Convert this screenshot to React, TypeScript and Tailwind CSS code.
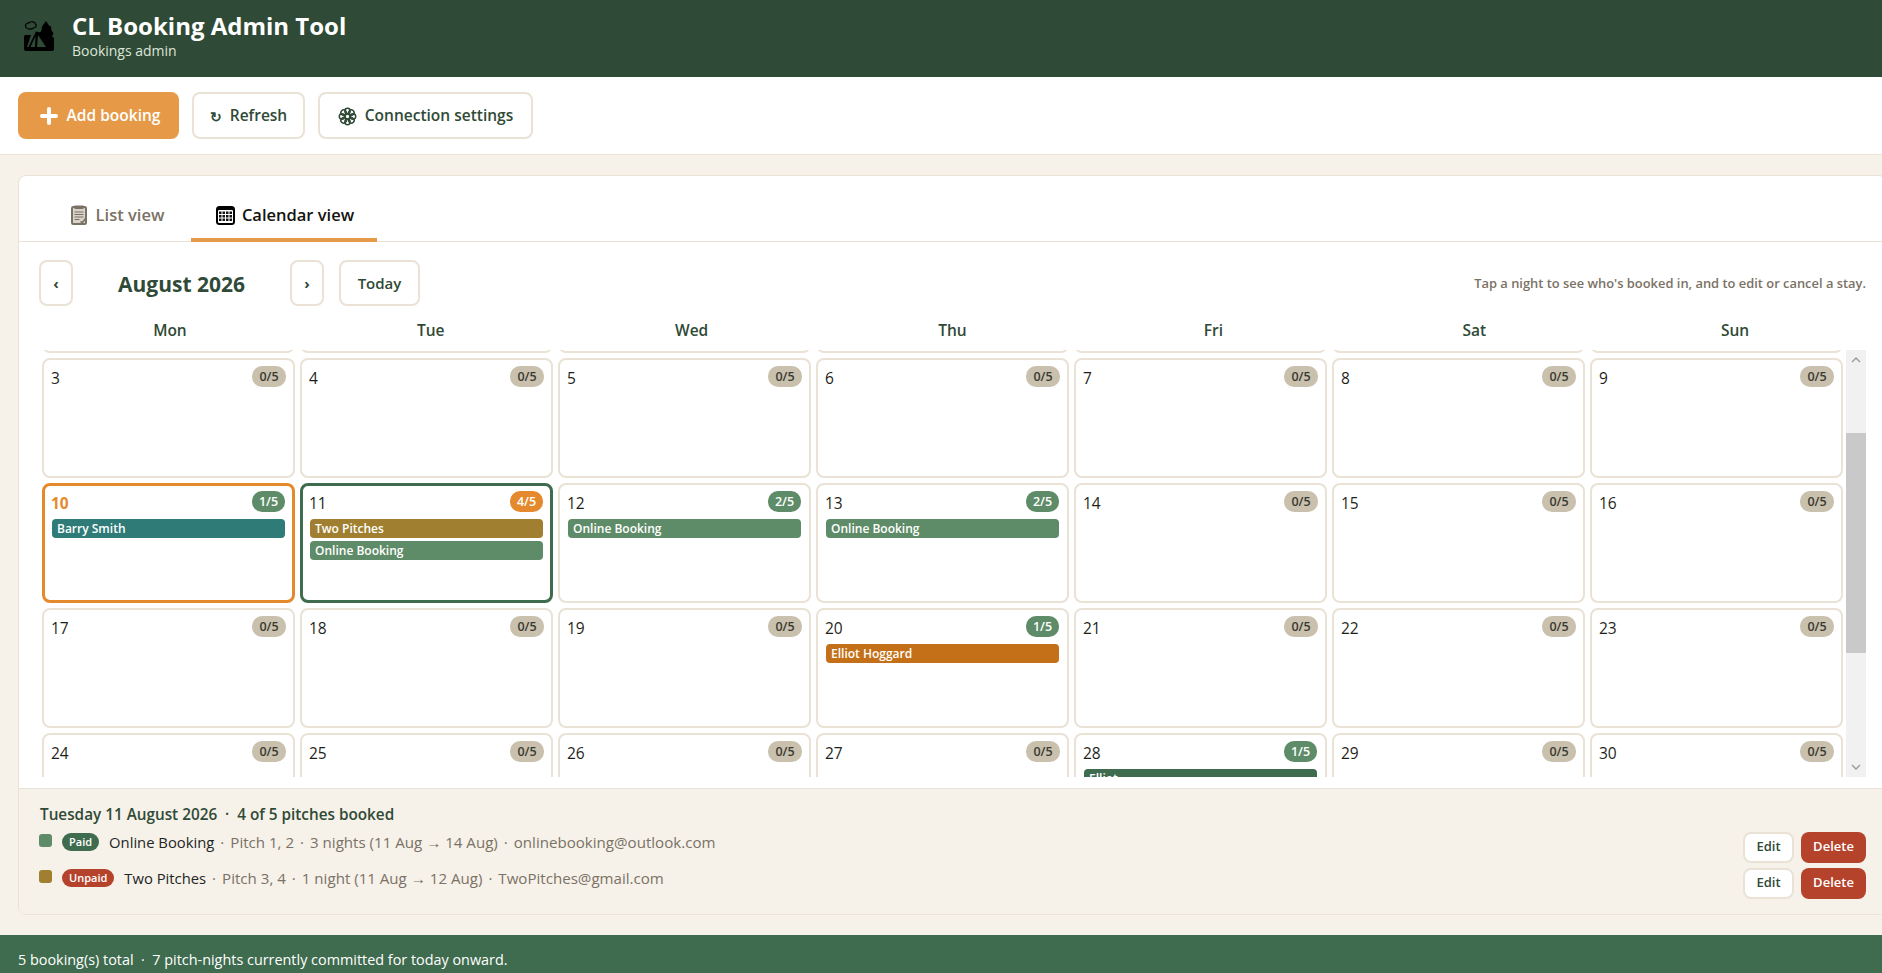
import { Plus } from 'lucide-react';

type Booking = { label: string; color: string };
type Day = { day: number; count?: number; tone?: 'today' | 'selected'; bookings?: Booking[] };

const SAGE = 'bg-[#5f8c68]';

const weekdays = ['Mon', 'Tue', 'Wed', 'Thu', 'Fri', 'Sat', 'Sun'];

const weeks: Day[][] = [
  [{ day: 27 }, { day: 28 }, { day: 29 }, { day: 30 }, { day: 31 }, { day: 1 }, { day: 2 }],
  [{ day: 3 }, { day: 4 }, { day: 5 }, { day: 6 }, { day: 7 }, { day: 8 }, { day: 9 }],
  [
    { day: 10, count: 1, tone: 'today', bookings: [{ label: 'Barry Smith', color: 'bg-[#2e7b78]' }] },
    {
      day: 11,
      count: 4,
      tone: 'selected',
      bookings: [
        { label: 'Two Pitches', color: 'bg-[#a08030]' },
        { label: 'Online Booking', color: SAGE },
      ],
    },
    { day: 12, count: 2, bookings: [{ label: 'Online Booking', color: SAGE }] },
    { day: 13, count: 2, bookings: [{ label: 'Online Booking', color: SAGE }] },
    { day: 14 },
    { day: 15 },
    { day: 16 },
  ],
  [
    { day: 17 },
    { day: 18 },
    { day: 19 },
    { day: 20, count: 1, bookings: [{ label: 'Elliot Hoggard', color: 'bg-[#c47018]' }] },
    { day: 21 },
    { day: 22 },
    { day: 23 },
  ],
  [
    { day: 24 },
    { day: 25 },
    { day: 26 },
    { day: 27 },
    { day: 28, count: 1, bookings: [{ label: 'Elliot', color: 'bg-[#3f6b4e]' }] },
    { day: 29 },
    { day: 30 },
  ],
];

function CampIcon() {
  return (
    <svg width="30" height="31" viewBox="0 0 30 31" className="shrink-0">
      <path
        d="M2 7.500C.5 5.500 2.500 2.500 5 3c1.500-2 6-1.500 6.500 1 1.500 1.500.5 4-2 4C7.500 9.500 3.500 9.500 2 7.500z"
        fill="none"
        stroke="#000"
        strokeWidth="1.200"
      />
      <path d="M22 1l3 4.500 2 1 .5 4 2 2.500-1.500 4H17l-1.500-4 2-2.500.5-4z" fill="#000" />
      <path d="M1.500 15H7L3 27h24l-3-10h4.500q1.500 0 1.500 1.500V29q0 2-2 2H2q-2 0-2-2V16.500Q0 15 1.500 15z" fill="#000" />
      <path d="M12 11.500l11 2.500 5 14H4z" fill="#000" />
      <path d="M11.500 16L6.500 27H11zM14 15l8 12h-9z" fill="#2f4a36" />
      <path d="M16 14.500l3 .7-.6 3-2.600-.7z" fill="#000" />
    </svg>
  );
}

function FlowerIcon() {
  const petals = [0, 45, 90, 135, 180, 225, 270, 315];
  return (
    <svg width="19" height="19" viewBox="0 0 19 19" fill="none" stroke="#2f4a36" strokeWidth="1.500" className="shrink-0">
      {petals.map((a) => (
        <circle key={a} cx="9.500" cy="4" r="2.700" transform={`rotate(${a} 9.500 9.500)`} />
      ))}
      <circle cx="9.500" cy="9.500" r="2.400" />
    </svg>
  );
}

function ClipboardIcon() {
  return (
    <svg width="16" height="20" viewBox="0 0 16 20" className="shrink-0">
      <rect x="1" y="2" width="14" height="17" rx="1.200" fill="#d9d4ca" stroke="#7a7265" strokeWidth="2" />
      <rect x="3.500" y="0.500" width="9" height="3.500" fill="#7a7265" />
      <path d="M3.500 7h9M3.500 9.500h9M3.500 12h9M3.500 14.500h5" stroke="#7a7265" strokeWidth="1.200" />
      <path d="M9.500 16.500l2 1 3-4" stroke="#7a7265" strokeWidth="1.500" fill="none" />
    </svg>
  );
}

function CalendarIcon() {
  const xs = [4, 7.500, 11, 14.500];
  return (
    <svg width="19" height="19" viewBox="0 0 19 19" className="shrink-0">
      <rect width="19" height="19" rx="3.500" fill="#000" />
      <rect x="2" y="4" width="15" height="13" rx="1" fill="#fff" />
      {[6, 9.500, 13].map((y) =>
        xs.map((x) => <rect key={`${x}-${y}`} x={x - 1} y={y - 0.5} width="2.500" height="2.500" fill="#111" />),
      )}
    </svg>
  );
}

function DayCell({ day, count = 0, tone, bookings = [] }: Day) {
  const frame =
    tone === 'today'
      ? 'border-[3px] border-[#e58a2c] px-[7px] pt-[5px]'
      : tone === 'selected'
        ? 'border-[3px] border-[#3f6b4e] px-[7px] pt-[5px]'
        : 'border-2 border-[#e9e2d5] px-[8px] pt-[6px]';
  const badge =
    count === 0
      ? 'w-[34px] bg-[#c9c1ae] text-[#3a3a30]'
      : count >= 4
        ? 'mr-px w-[33px] bg-[#e58a2c] text-white'
        : 'mr-px w-[33px] bg-[#5f8c68] text-white';

  return (
    <div className={`h-[120px] overflow-hidden rounded-lg bg-white ${frame}`}>
      <div className="-mr-px flex h-[28px] items-start justify-between">
        <span
          className={`-ml-px pt-[2px] text-[15.5px] leading-[20px] ${
            tone === 'today' ? 'font-bold text-[#e58a2c]' : 'font-medium text-[#1f1f1a]'
          }`}
        >
          {day}
        </span>
        <span className={`h-[21px] rounded-[10px] text-center text-[12.5px] font-semibold leading-[21px] ${badge}`}>
          {count}/5
        </span>
      </div>
      <div className="flex flex-col gap-[3px]">
        {bookings.map((b) => (
          <div
            key={b.label}
            className={`h-[19px] rounded-[4px] px-[5px] text-[12px] font-semibold leading-[19px] text-white ${b.color}`}
          >
            {b.label}
          </div>
        ))}
      </div>
    </div>
  );
}

function DetailRow({
  swatch,
  paid,
  name,
  meta,
}: {
  swatch: string;
  paid: boolean;
  name: string;
  meta: string[];
}) {
  return (
    <div className="flex h-[36px] items-center justify-between">
      <div className="flex items-center pb-[9px]">
        <span className={`mb-[3px] h-[13px] w-[13px] rounded-[3px] ${swatch}`} />
        <span
          className={`ml-[10px] mb-px h-[18px] rounded-full px-[7px] text-[11px] font-semibold leading-[18px] text-white ${
            paid ? 'bg-[#3f6b4e]' : 'bg-[#b5432b]'
          }`}
        >
          {paid ? 'Paid' : 'Unpaid'}
        </span>
        <span className="ml-[10px] text-[14.8px] font-medium text-[#23261f]">{name}</span>
        <span className="text-[15.1px] font-medium text-[#7a7265]">
          {meta.map((m) => (
            <span key={m}>
              <span className="mx-[6px]">·</span>
              {m}
            </span>
          ))}
        </span>
      </div>
      <div className="flex gap-[7px]">
        <button className="h-[31px] w-[51px] rounded-lg border-2 border-[#e9e2d5] bg-white text-[13px] font-semibold text-[#2f4a36]">
          Edit
        </button>
        <button className="h-[31px] w-[65px] rounded-lg bg-[#b5432b] text-[13px] font-semibold text-white">
          Delete
        </button>
      </div>
    </div>
  );
}

export default function App() {
  return (
    <div className="flex h-screen flex-col overflow-hidden bg-[#f6f1e9] font-['Open_Sans',sans-serif]">
      <header className="flex h-[77px] shrink-0 items-center gap-[18px] bg-[#2f4a36] pl-[24px] pb-[6px]">
        <CampIcon />
        <div>
          <h1 className="text-[24px] font-bold leading-[31px] text-white">CL Booking Admin Tool</h1>
          <p className="text-[14px] leading-[20px] text-[#dde6da]">Bookings admin</p>
        </div>
      </header>

      <div className="flex h-[78px] shrink-0 items-center gap-[13px] border-b border-[#e9e2d5] bg-white px-[18px]">
        <button className="flex h-[47px] w-[161px] items-center justify-center gap-[6px] rounded-lg bg-[#e69a47] pt-px text-[15.5px] font-semibold text-white">
          <Plus size={24} strokeWidth={4} />
          Add booking
        </button>
        <button className="flex h-[47px] w-[113px] items-center justify-center gap-[8px] rounded-lg border-2 border-[#e9e2d5] bg-white pt-px text-[15.5px] font-semibold text-[#2f4a36]">
          <span className="text-[14px] font-bold">↻</span>
          Refresh
        </button>
        <button className="flex h-[47px] w-[215px] items-center justify-center gap-[8px] rounded-lg border-2 border-[#e9e2d5] bg-white pt-px text-[15.5px] font-semibold text-[#2f4a36]">
          <FlowerIcon />
          Connection settings
        </button>
      </div>

      <main className="min-h-0 flex-1 pt-[20px] pl-[18px]">
        <section className="flex h-[740px] w-[1869px] flex-col overflow-hidden rounded-lg border border-[#e9e2d5] bg-white">
          <div className="flex h-[66px] shrink-0 items-end border-b border-[#e9e2d5] pl-[25px]">
            <button className="flex h-[44px] w-[147px] items-center justify-center gap-[9px] pb-[8px] text-[16.5px] font-semibold text-[#7a7265]">
              <ClipboardIcon />
              List view
            </button>
            <button className="-mb-px flex h-[45px] w-[186px] items-center justify-center gap-[7px] border-b-4 border-[#e69a47] pl-[2px] pb-[4px] text-[16.5px] font-semibold text-[#14140f]">
              <CalendarIcon />
              Calendar view
            </button>
          </div>

          <div className="flex min-h-0 flex-1 flex-col px-[20px] pt-[18px]">
            <div className="flex h-[46px] shrink-0 items-center">
              <button className="h-[46px] w-[34px] rounded-lg border-2 border-[#e9e2d5] text-[15px] font-bold text-[#2f4a36]">
                ‹
              </button>
              <h2 className="w-[217px] pt-[3px] text-center text-[21px] font-bold text-[#2f4a36]">August 2026</h2>
              <button className="h-[46px] w-[34px] rounded-lg border-2 border-[#e9e2d5] text-[15px] font-bold text-[#2f4a36]">
                ›
              </button>
              <button className="ml-[15px] h-[46px] w-[81px] rounded-lg border-2 border-[#e9e2d5] pt-px text-[15px] font-semibold text-[#2f4a36]">
                Today
              </button>
              <p className="ml-auto pt-px text-[12.9px] font-semibold text-[#7a7265]">
                Tap a night to see who's booked in, and to edit or cancel a stay.
              </p>
            </div>

            <div className="grid h-[44px] shrink-0 grid-cols-7 gap-[5px] px-[3px] pt-[13px]">
              {weekdays.map((d) => (
                <div key={d} className="text-center text-[15.5px] font-semibold text-[#2f4a36]">
                  {d}
                </div>
              ))}
            </div>

            <div className="flex h-[427px] shrink-0">
              <div className="min-w-0 flex-1 overflow-hidden px-[3px]">
                <div className="-mt-[117px] flex flex-col gap-[5px]">
                  {weeks.map((week, i) => (
                    <div key={i} className="grid grid-cols-7 gap-[5px]">
                      {week.map((d) => (
                        <DayCell key={d.day} {...d} />
                      ))}
                    </div>
                  ))}
                </div>
              </div>
              <div className="flex w-[20px] shrink-0 flex-col bg-[#f1f1f1]">
                <div className="flex h-[20px] items-center justify-center">
                  <svg width="10" height="6" viewBox="0 0 10 6" fill="none" stroke="#9a9a9a" strokeWidth="1.400">
                    <path d="M1 5l4-4 4 4" />
                  </svg>
                </div>
                <div className="mt-[63px] h-[220px] bg-[#c9c9c9]" />
                <div className="mt-auto flex h-[20px] items-center justify-center">
                  <svg width="10" height="6" viewBox="0 0 10 6" fill="none" stroke="#9a9a9a" strokeWidth="1.400">
                    <path d="M1 1l4 4 4-4" />
                  </svg>
                </div>
              </div>
            </div>
          </div>

          <div className="mt-[10px] h-[126px] shrink-0 border-t border-[#e9e2d5] bg-[#f6f1e9] pl-[20px] pr-[20px] pt-[15px]">
            <h3 className="pl-px text-[15.3px] font-semibold leading-[20px] text-[#2f4a36]">
              Tuesday 11 August 2026 &nbsp;·&nbsp; 4 of 5 pitches booked
            </h3>
            <div className="mt-[5px]">
              <DetailRow
                swatch={SAGE}
                paid
                name="Online Booking"
                meta={['Pitch 1, 2', '3 nights (11 Aug → 14 Aug)', 'onlinebooking@outlook.com']}
              />
              <DetailRow
                swatch="bg-[#a08030]"
                paid={false}
                name="Two Pitches"
                meta={['Pitch 3, 4', '1 night (11 Aug → 12 Aug)', 'TwoPitches@gmail.com']}
              />
            </div>
          </div>
        </section>
      </main>

      <footer className="h-[38px] shrink-0 bg-[#3f6b4e] pl-[18px] pt-[15px] text-[14.4px] leading-[20px] text-white">
        5 booking(s) total &nbsp;·&nbsp; 7 pitch-nights currently committed for today onward.
      </footer>
    </div>
  );
}
